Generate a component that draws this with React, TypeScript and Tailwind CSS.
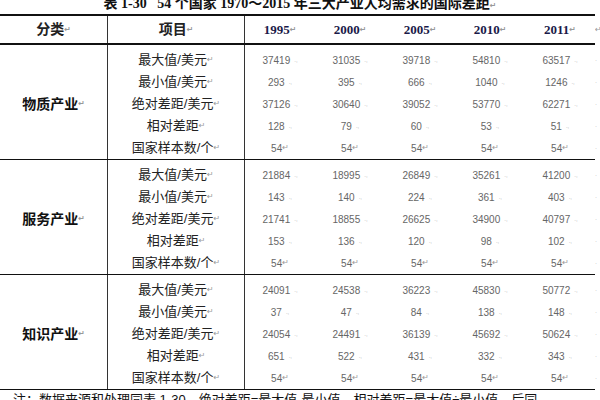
const items = ["最大值/美元", "最小值/美元", "绝对差距/美元", "相对差距", "国家样本数/个"];
const years = ["1995", "2000", "2005", "2010", "2011"];

const groups = [
  {
    name: "物质产业",
    rows: [
      [37419, 31035, 39718, 54810, 63517],
      [293, 395, 666, 1040, 1246],
      [37126, 30640, 39052, 53770, 62271],
      [128, 79, 60, 53, 51],
      [54, 54, 54, 54, 54],
    ],
  },
  {
    name: "服务产业",
    rows: [
      [21884, 18995, 26849, 35261, 41200],
      [143, 140, 224, 361, 403],
      [21741, 18855, 26625, 34900, 40797],
      [153, 136, 120, 98, 102],
      [54, 54, 54, 54, 54],
    ],
  },
  {
    name: "知识产业",
    rows: [
      [24091, 24538, 36223, 45830, 50772],
      [37, 47, 84, 138, 148],
      [24054, 24491, 36139, 45692, 50624],
      [651, 522, 431, 332, 343],
      [54, 54, 54, 54, 54],
    ],
  },
];

function Mark({ className = "" }: { className?: string }) {
  return <span className={`text-[8px] text-[#999] font-['DejaVu_Sans',sans-serif] ${className}`}>↵</span>;
}

export default function App() {
  return (
    <div className="w-[600px] h-[400px] overflow-hidden bg-white text-[#222] font-['Liberation_Sans','Noto_Sans_CJK_SC',sans-serif]">
      <div className="h-[14px] overflow-hidden">
        <div className="-mt-[4px] text-center text-[14px] leading-[16px] font-bold text-[#111] whitespace-pre font-['Liberation_Serif','Noto_Sans_CJK_SC',serif]">
          表 1-30{"   "}54 个国家 1970～2015 年三大产业人均需求的国际差距<Mark />
        </div>
      </div>

      <div className="flex">
        <div className="w-[595px] h-[31px] flex border-y-2 border-[#111]">
          <div className="w-[108px] border-r border-[#333] flex items-center justify-center text-[14px] font-bold">
            分类<Mark />
          </div>
          <div className="w-[137px] border-r border-[#333] flex items-center justify-center text-[14px] font-bold">
            项目<Mark />
          </div>
          {years.map((y) => (
            <div
              key={y}
              className="w-[70px] flex items-center justify-center text-[13px] font-bold text-[#1a1a48] font-['Liberation_Serif',serif]"
            >
              {y}
              <Mark />
            </div>
          ))}
        </div>
        <div className="w-[5px] flex items-center overflow-hidden">
          <Mark className="text-[6px]" />
        </div>
      </div>

      {groups.map((g) => (
        <div key={g.name} className="flex">
          <div className="w-[595px] flex border-b-[1.5px] border-[#111]">
            <div className="w-[108px] border-r border-[#333] pt-[4px] flex items-center justify-center text-[14px] font-bold text-[#111]">
              {g.name}
              <Mark />
            </div>
            <div className="w-[137px] border-r border-[#333] pt-[4px] flex flex-col">
              {items.map((it) => (
                <div key={it} className="h-[22px] flex items-center justify-center text-[13px] text-[#222]">
                  {it}
                  <Mark />
                </div>
              ))}
            </div>
            <div className="w-[350px] pt-[4px] flex flex-col">
              {g.rows.map((r, ri) => (
                <div key={ri} className="h-[22px] grid grid-cols-5">
                  {r.map((v, ci) => (
                    <div key={ci} className="flex items-center justify-center text-[10px] text-[#666]">
                      {v}
                      {ri === 4 ? <Mark className="text-[7px]" /> : <span className="ml-[4px] text-[6px] text-[#aaa]">.,</span>}
                    </div>
                  ))}
                </div>
              ))}
            </div>
          </div>
          <div className="w-[5px] pt-[4px] flex flex-col overflow-hidden">
            {items.map((it) => (
              <div key={it} className="h-[22px] flex items-center text-[6px] text-[#999]">
                ·
              </div>
            ))}
          </div>
        </div>
      ))}

      <div className="flex">
        <div className="pl-[13px] pt-[2px] text-[13px] leading-[16px] text-[#111] whitespace-nowrap">
          注：数据来源和处理同表 1-30，绝对差距=最大值-最小值，相对差距=最大值÷最小值，后同。
        </div>
      </div>
    </div>
  );
}
